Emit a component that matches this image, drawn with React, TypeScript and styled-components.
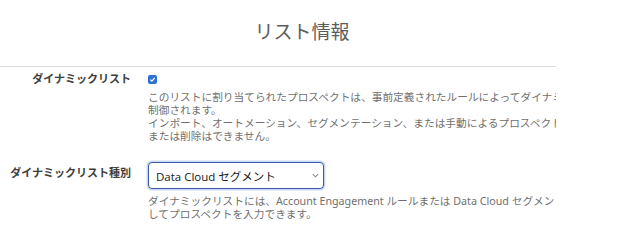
import React from 'react';
import styled, { createGlobalStyle } from 'styled-components';

const GlobalStyle = createGlobalStyle`
  html, body {
    margin: 0;
    padding: 0;
    background: #ffffff;
  }
  body {
    font-family: "Noto Sans", "Noto Sans CJK JP", sans-serif;
    -webkit-font-smoothing: antialiased;
  }
`;

const Page = styled.div`
  width: 627px;
  height: 238px;
  overflow: hidden;
  background: #fff;
`;

const Title = styled.h2`
  margin: 0;
  padding: 17px 23px 0 0;
  height: 66px;
  box-sizing: border-box;
  text-align: center;
  font-family: "Noto Sans CJK JP", sans-serif;
  font-size: 19px;
  font-weight: 400;
  color: #5c5c5c;
  line-height: 28px;
`;

const Section = styled.div`
  width: 556px;
  overflow: hidden;
  border-top: 1px solid #dcdcdc;
  padding-top: 3px;
  display: flex;
  flex-direction: column;
  gap: 19px;
`;

const Row = styled.div`
  display: grid;
  grid-template-columns: 131px 1fr;
  column-gap: 17px;
  align-items: start;
`;

const Label = styled.div<{ $top: number }>`
  padding-top: ${p => p.$top}px;
  text-align: right;
  font-family: "Noto Sans CJK JP", sans-serif;
  font-size: 11px;
  font-weight: 700;
  color: #3e3e3c;
  line-height: 16px;
  white-space: nowrap;
`;

const Field = styled.div`
  display: flex;
  flex-direction: column;
  min-width: 0;
`;

const Check = styled.span`
  display: flex;
  align-items: center;
  justify-content: center;
  width: 9px;
  height: 9px;
  margin: 5px 0 7px 0;
  border-radius: 2px;
  background: #2f6fd8;
`;

const Help = styled.div<{ $mt?: number }>`
  margin-top: ${p => p.$mt ?? 0}px;
  font-family: "Noto Sans", "Noto Sans CJK JP", sans-serif;
  font-size: 10.7px;
  line-height: 13px;
  color: #707070;
  white-space: nowrap;
`;

const SelectBox = styled.div`
  display: flex;
  align-items: center;
  justify-content: space-between;
  width: 176px;
  height: 27px;
  box-sizing: border-box;
  padding: 0 3px 0 7px;
  border: 1.5px solid #3b5aa8;
  border-radius: 4px;
  background: #fff;
  box-shadow: 0 0 0 1.5px #c9d8f5;
  font-family: "Open Sans", "Noto Sans CJK JP", sans-serif;
  font-size: 11.5px;
  color: #181818;
`;

const Chevron = () => (
  <svg width="9" height="9" viewBox="0 0 10 10">
    <path d="M2 3.5 L5 6.5 L8 3.5" fill="none" stroke="#8a8a8a" strokeWidth="1.2" />
  </svg>
);

const App: React.FC = () => (
  <>
    <GlobalStyle />
    <Page>
      <Title>リスト情報</Title>
      <Section>
        <Row>
          <Label $top={0}>ダイナミックリスト</Label>
          <Field>
            <Check>
              <svg width="7" height="7" viewBox="0 0 10 10">
                <path d="M2 5.2 L4.2 7.4 L8.2 2.8" fill="none" stroke="#fff" strokeWidth="1.8" />
              </svg>
            </Check>
            <Help>このリストに割り当てられたプロスペクトは、事前定義されたルールによってダイナミックに</Help>
            <Help>制御されます。</Help>
            <Help>インポート、オートメーション、セグメンテーション、または手動によるプロスペクトの追加</Help>
            <Help>または削除はできません。</Help>
          </Field>
        </Row>
        <Row>
          <Label $top={2}>ダイナミックリスト種別</Label>
          <Field>
            <SelectBox>
              <span>Data Cloud セグメント</span>
              <Chevron />
            </SelectBox>
            <Help $mt={6}>ダイナミックリストには、Account Engagement ルールまたは Data Cloud セグメントを使用</Help>
            <Help>してプロスペクトを入力できます。</Help>
          </Field>
        </Row>
      </Section>
    </Page>
  </>
);

export default App;
